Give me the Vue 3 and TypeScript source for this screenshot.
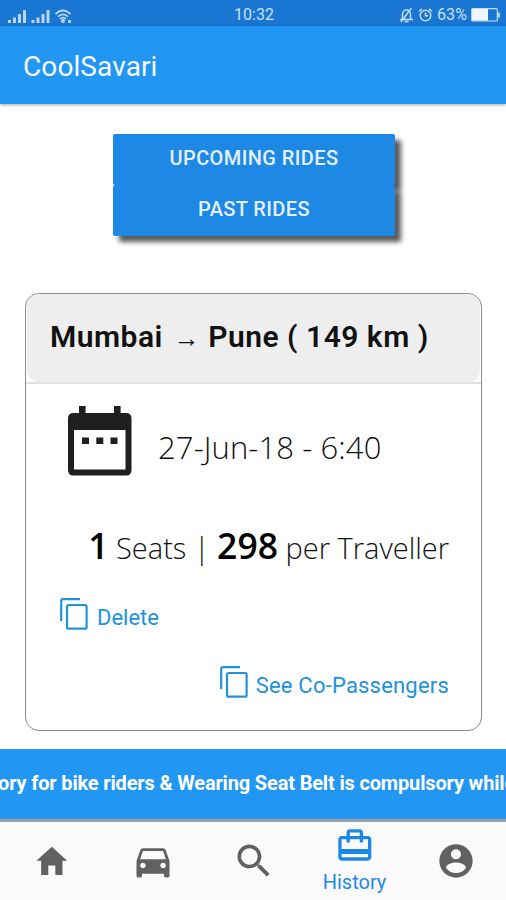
<script setup lang="ts">
interface Tab {
  name: string
  label?: string
  size: number
  path: string
}

const ride = {
  from: 'Mumbai',
  to: 'Pune',
  distance: 149,
  date: '27-Jun-18 - 6:40',
  seats: 1,
  price: 298,
}

const tabs: Tab[] = [
  { name: 'home', size: 37.6, path: 'M9.75 21V15H14.25V21H18.8V12H21.8L12 3 2.2 12H5.2V21Z' },
  {
    name: 'car',
    size: 44,
    path: 'M18.92 6.01C18.72 5.42 18.16 5 17.5 5h-11c-.66 0-1.21.42-1.42 1.01L3 12v8c0 .55.45 1 1 1h1c.55 0 1-.45 1-1v-1h12v1c0 .55.45 1 1 1h1c.55 0 1-.45 1-1v-8l-2.08-5.99zM6.5 16c-.83 0-1.5-.67-1.5-1.5S5.67 13 6.5 13s1.5.67 1.5 1.5S7.33 16 6.5 16zm11 0c-.83 0-1.5-.67-1.5-1.5s.67-1.5 1.5-1.5 1.5.67 1.5 1.5-.67 1.5-1.5 1.5zM5 11l1.5-4.5h11L19 11H5z',
  },
  {
    name: 'search',
    size: 44,
    path: 'M15.5 14h-.79l-.28-.27C15.41 12.59 16 11.11 16 9.5 16 5.91 13.09 3 9.5 3S3 5.91 3 9.5 5.91 16 9.5 16c1.61 0 3.09-.59 4.23-1.57l.27.28v.79l5 4.99L20.49 19l-4.99-5zm-6 0C7.01 14 5 11.99 5 9.5S7.01 5 9.5 5 14 7.01 14 9.5 11.99 14 9.5 14z',
  },
  {
    name: 'history',
    label: 'History',
    size: 39.6,
    path: 'M20 6h-3V4c0-1.11-.89-2-2-2H9c-1.11 0-2 .89-2 2v2H4c-1.11 0-2 .89-2 2v11c0 1.11.89 2 2 2h16c1.11 0 2-.89 2-2V8c0-1.11-.89-2-2-2zM9 4h6v2H9V4zm11 15H4v-2h16v2zm0-5H4V8h3v2h2V8h6v2h2V8h3v6z',
  },
  {
    name: 'account',
    size: 40,
    path: 'M12 2C6.48 2 2 6.48 2 12s4.48 10 10 10 10-4.48 10-10S17.52 2 12 2zm0 3c1.66 0 3 1.34 3 3s-1.34 3-3 3-3-1.34-3-3 1.34-3 3-3zm0 14.2c-2.5 0-4.71-1.28-6-3.22.03-1.99 4-3.08 6-3.08 1.99 0 5.97 1.09 6 3.08-1.29 1.94-3.5 3.22-6 3.22z',
  },
]
</script>

<template>
  <div class="screen">
    <div class="status">
      <svg class="signals" width="68" height="18" viewBox="0 0 68 18">
        <g fill="#b9d6f5">
          <path d="M0 13h3v3H0zM5 10.500h3V16H5zM10 7h3v9h-3zM15 3h3v13h-3z" />
          <path d="M23.500 13h3v3h-3zM28.500 10.500h3V16h-3zM33.500 7h3v9h-3zM38.500 3h3v13h-3z" />
          <circle cx="55" cy="14" r="2" />
          <path d="M60 13h3v3h-3z" />
        </g>
        <g fill="none" stroke="#b9d6f5" stroke-width="1.8">
          <path d="M47.500 7Q55 0 62.500 7M50 9.700Q55 5 60 9.700M52 12Q55 9.300 58 12" />
        </g>
      </svg>
      <span class="clock">10:32</span>
      <div class="status-right">
        <svg width="15" height="16" viewBox="0 0 15 16" fill="none" stroke="#c3dcf7" stroke-width="1.5">
          <path d="M1 12.500h13M3.500 12V7a4 4 0 0 1 8 0v5M5.500 14.500h4M12.500 1 2 15" />
        </svg>
        <svg width="15" height="16" viewBox="0 0 15 16" fill="none" stroke="#c3dcf7" stroke-width="1.5">
          <circle cx="7.500" cy="8.500" r="5.300" />
          <path d="M7.500 5.500v3.300h2.700M1 4.500 4 1.800M14 4.500 11 1.800" />
        </svg>
        <span class="percent">63%</span>
        <svg width="29" height="14" viewBox="0 0 29 14">
          <rect x=".7" y=".7" width="25.600" height="12.300" rx="1" fill="none" stroke="#c3dcf7" stroke-width="1.200" />
          <rect x="1" y="1" width="16" height="11.600" fill="#eef6ff" />
          <path d="M27 4.500h1.800v5H27z" fill="#c3dcf7" />
        </svg>
      </div>
    </div>

    <header class="appbar"><h1>CoolSavari</h1></header>

    <main class="content">
      <div class="switcher">
        <button class="upcoming">UPCOMING RIDES</button>
        <button class="past">PAST RIDES</button>
      </div>

      <section class="card">
        <div class="card-title">
          <h2>
            {{ ride.from }} <span class="arrow">→</span> {{ ride.to }} ( {{ ride.distance }} km )
          </h2>
        </div>
        <div class="card-body">
          <div class="date-row">
            <svg width="64" height="70" viewBox="0 0 64 70">
              <path
                fill="#1f1f1f"
                fill-rule="evenodd"
                d="M11 0h6.600v7H46V0h6.600v7H58q5.500 0 5.500 5.500v51.500Q63.500 69.500 58 69.500H5.500Q0 69.500 0 64v-51.500Q0 7 5.500 7H11zM6 24v39.500h51.500V24z"
              />
              <path fill="#1f1f1f" d="M14 31.500h7v6.500h-7zM28.300 31.500h7v6.500h-7zM42.500 31.500h7v6.500h-7z" />
            </svg>
            <span class="date">{{ ride.date }}</span>
          </div>
          <p class="fare"><b>{{ ride.seats }}</b> Seats | <b>{{ ride.price }}</b> per Traveller</p>
          <a class="action delete">
            <svg width="28" height="32" viewBox="0 0 28 32" fill="none" stroke="#2092dc" stroke-width="2.200">
              <path d="M1.200 23V3q0-1.800 1.800-1.800H20" />
              <rect x="7" y="7" width="19.600" height="23.700" rx="1.800" />
            </svg>
            <span>Delete</span>
          </a>
          <a class="action passengers">
            <svg width="28" height="32" viewBox="0 0 28 32" fill="none" stroke="#2092dc" stroke-width="2.200">
              <path d="M1.200 23V3q0-1.800 1.800-1.800H20" />
              <rect x="7" y="7" width="19.600" height="23.700" rx="1.800" />
            </svg>
            <span>See Co-Passengers</span>
          </a>
        </div>
      </section>
    </main>

    <div class="ticker">
      <span>ory for bike riders &amp; Wearing Seat Belt is compulsory while</span>
    </div>

    <nav class="tabs">
      <a v-for="tab in tabs" :key="tab.name" class="tab" :class="{ active: tab.label }">
        <svg :width="tab.size" :height="tab.size" viewBox="0 0 24 24"><path :d="tab.path" /></svg>
        <span v-if="tab.label">{{ tab.label }}</span>
      </a>
    </nav>
  </div>
</template>

<style>
body {
  margin: 0;
  background: #fff;
}
</style>

<style scoped>
.screen {
  display: flex;
  flex-direction: column;
  width: 506px;
  height: 900px;
  overflow: hidden;
  background: #fff;
  font-family: Roboto, 'Liberation Sans', sans-serif;
}
.status {
  display: grid;
  grid-template-columns: 1fr auto 1fr;
  align-items: center;
  height: 26px;
  box-sizing: border-box;
  padding: 1px 6px 0 8px;
  background: #1976d2;
  color: #c9e0f8;
  font-size: 16px;
}
.signals {
  margin-top: 3px;
}
.clock {
  line-height: 27px;
}
.status-right {
  display: flex;
  align-items: center;
  justify-content: flex-end;
  gap: 4px;
}
.percent {
  letter-spacing: 0.1px;
}
.appbar {
  position: relative;
  height: 78px;
  flex: none;
  background: #2196f3;
  box-shadow: 0 1px 3px rgba(0, 0, 0, 0.35);
}
h1 {
  margin: 0;
  padding-left: 23px;
  color: #f5faff;
  font-size: 28px;
  font-weight: 400;
  line-height: 82px;
  letter-spacing: 0.1px;
}
.content {
  flex: 1;
  padding: 30px 24px 0 25px;
}
.switcher {
  display: flex;
  flex-direction: column;
  width: 282px;
  margin: 0 0 0 88px;
}
.switcher button {
  height: 51px;
  padding: 0 0 3px;
  border: 0;
  border-radius: 2px;
  background: #1e88e5;
  box-shadow: 6px 6px 5px rgba(0, 0, 0, 0.65);
  color: #e3f1ff;
  font-family: inherit;
  font-size: 20px;
  font-weight: 500;
  letter-spacing: 0.4px;
}
.card {
  box-sizing: border-box;
  width: 457px;
  height: 438px;
  margin-top: 57px;
  overflow: hidden;
  border: 1px solid #8c8c8c;
  border-radius: 14px;
  background: #fff;
}
.card-title {
  height: 88px;
  margin: 0 1px;
  border-radius: 12px;
  background: #eee;
}
h2 {
  margin: 0;
  padding-left: 23px;
  color: #111;
  font-size: 30px;
  font-weight: 600;
  line-height: 86px;
  letter-spacing: 0.5px;
  white-space: nowrap;
}
.arrow {
  margin: 0 0 0 3px;
  font-size: 26px;
}
.card-body {
  display: flex;
  flex-direction: column;
  border-top: 2px solid #e0e0e0;
  color: #111;
  font-family: 'Open Sans', sans-serif;
  font-weight: 300;
}
.date-row {
  display: flex;
  gap: 26px;
  padding: 22px 0 0 42px;
}
.date {
  padding-top: 7px;
  font-size: 31px;
  line-height: 69px;
  letter-spacing: 0.12px;
}
.fare {
  margin: 33px 32px 0 0;
  font-size: 29px;
  line-height: 60px;
  text-align: right;
  white-space: nowrap;
}
.fare b {
  color: #000;
  font-size: 35.5px;
  font-weight: 600;
}
.action {
  display: flex;
  gap: 9px;
  height: 32px;
  color: #2092dc;
  font-family: Roboto, sans-serif;
  font-size: 22px;
  font-weight: 400;
  line-height: 40px;
}
.delete {
  margin: 20px 0 0 34px;
}
.passengers {
  justify-content: flex-end;
  gap: 8px;
  margin: 36px 32px 0 0;
  letter-spacing: 0.2px;
}
.ticker {
  box-sizing: border-box;
  flex: none;
  height: 73px;
  overflow: hidden;
  border-bottom: 3px solid #999fa8;
  background: #2196f3;
  color: #fff;
  font-size: 20px;
  font-weight: 700;
  line-height: 68px;
  letter-spacing: -0.16px;
  white-space: nowrap;
}
.ticker span {
  margin-left: -2px;
}
.tabs {
  display: grid;
  grid-template-columns: repeat(5, 1fr);
  flex: none;
  height: 78px;
  padding-left: 1px;
  background: #fafafa;
}
.tab {
  display: flex;
  flex-direction: column;
  align-items: center;
  justify-content: center;
  color: #616161;
}
.tab svg {
  fill: currentColor;
}
.tab.active {
  justify-content: flex-start;
  color: #1e88e5;
  font-size: 20px;
  line-height: 32px;
}
.tab.active svg {
  margin-top: 4px;
}
</style>
